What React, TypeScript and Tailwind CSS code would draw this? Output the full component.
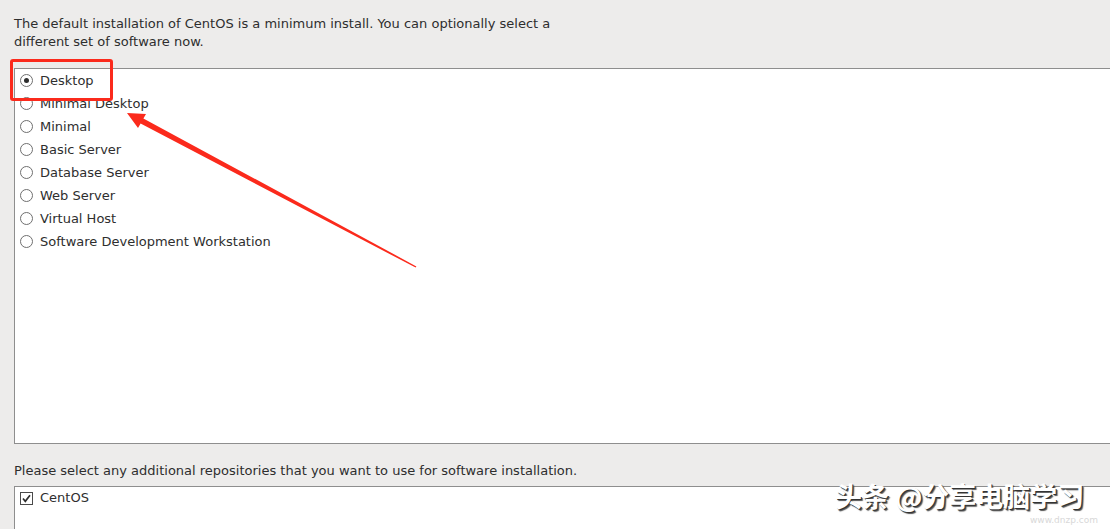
import React from "react";

const items = [
  "Desktop",
  "Minimal Desktop",
  "Minimal",
  "Basic Server",
  "Database Server",
  "Web Server",
  "Virtual Host",
  "Software Development Workstation",
];

function Radio({ checked }: { checked?: boolean }) {
  return (
    <span className="w-[13px] h-[13px] rounded-full border border-[#6f6f6f] bg-white flex items-center justify-center shrink-0">
      {checked && <span className="w-[5px] h-[5px] rounded-full bg-[#2e2e2e]" />}
    </span>
  );
}

function Check() {
  return (
    <span className="w-[13px] h-[13px] border border-[#4a4a4a] bg-white flex items-center justify-center shrink-0">
      <svg width="11" height="11" viewBox="0 0 11 11">
        <path d="M2 5.5 L4.3 8.3 L9 2.2" fill="none" stroke="#2e2e2e" strokeWidth="1.7" />
      </svg>
    </span>
  );
}

export default function App() {
  return (
    <div
      className="relative w-[1110px] h-[529px] overflow-hidden bg-[#edeceb] text-[13px] leading-[18px] text-[#2e2e2e]"
      style={{ fontFamily: '"DejaVu Sans", Verdana, sans-serif' }}
    >
      <div className="pl-[14px] pt-[15px]">
        <p>The default installation of CentOS is a minimum install. You can optionally select a</p>
        <p>different set of software now.</p>
      </div>

      <div className="ml-[14px] mt-[17px] h-[376px] bg-white border-l border-t border-b border-[#8e8e8e]">
        {items.map((it, i) => (
          <div key={it} className="h-[23px] flex items-center pl-[5px] gap-[7px]">
            <Radio checked={i === 0} />
            <span>{it}</span>
          </div>
        ))}
      </div>

      <p className="pl-[14px] mt-[18px]">
        Please select any additional repositories that you want to use for software installation.
      </p>

      <div className="ml-[14px] mt-[6px] h-[60px] bg-white border-l border-t border-[#8e8e8e]">
        <div className="h-[22px] flex items-center pl-[5px] gap-[7px]">
          <Check />
          <span>CentOS</span>
        </div>
      </div>

      {/* annotation: red rectangle */}
      <div className="absolute left-[10px] top-[59px] w-[103px] h-[42px] border-[3px] border-[#fb2a1c] rounded-[3px]" />

      {/* annotation: arrow */}
      <svg className="absolute left-0 top-0" width="1110" height="529" viewBox="0 0 1110 529">
        <polygon
          points="127,113 146,114 143.4,118.4 416.4,266.4 415.6,267.6 140.6,123.6 138,128"
          fill="#fb2a1c"
        />
      </svg>

      {/* watermark */}
      <div
        className="absolute left-[835px] top-[479px] text-[27px] leading-[34px] font-bold text-white whitespace-nowrap [text-shadow:1px_1px_0_#333,2px_2px_1px_#555]"
        style={{ fontFamily: '"Noto Sans CJK SC", "Noto Sans", sans-serif' }}
      >
        头条 @分享电脑学习
      </div>
      <div
        className="absolute left-[1030px] top-[515px] text-[9px] leading-[11px] text-[#d8d8d8] whitespace-nowrap"
        style={{ fontFamily: '"DejaVu Sans", sans-serif' }}
      >
        www.dnzp.com
      </div>
    </div>
  );
}
